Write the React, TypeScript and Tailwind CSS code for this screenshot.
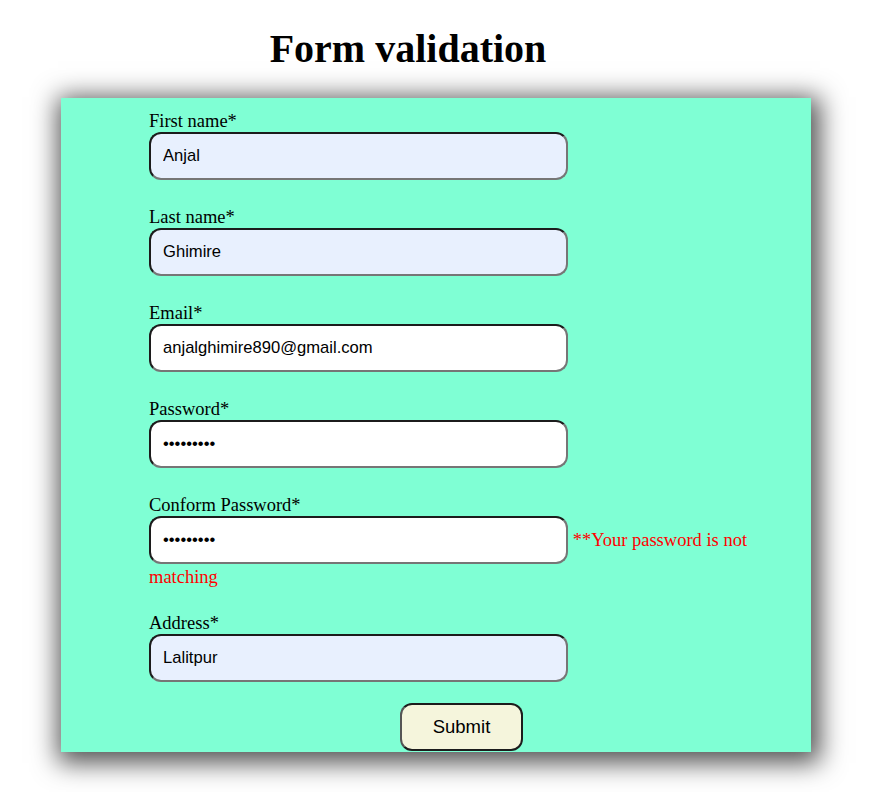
export default function App() {
  const inputBase =
    "inline-block h-12 w-[419px] align-middle rounded-xl border-2 border-t-[#1c1c1c] border-l-[#1c1c1c] border-b-[#767676] border-r-[#767676] px-3 font-['Liberation_Sans',Arial,sans-serif] text-[16.6px] text-black outline-none";

  const fields = [
    { label: "First name*", value: "Anjal", type: "text", filled: true },
    { label: "Last name*", value: "Ghimire", type: "text", filled: true },
    { label: "Email*", value: "anjalghimire890@gmail.com", type: "email", filled: false },
    { label: "Password*", value: "abcdefghi", type: "password", filled: false },
    {
      label: "Conform Password*",
      value: "abcdefghj",
      type: "password",
      filled: false,
      error: "**Your password is not matching",
    },
    { label: "Address*", value: "Lalitpur", type: "text", filled: true },
  ];

  return (
    <div className="min-h-[792px] bg-white font-['Liberation_Serif','Times_New_Roman',serif] text-black">
      <h1 className="pt-[26px] pr-[72px] text-center text-[40px] font-bold leading-[46px]">
        Form validation
      </h1>

      <form
        className="ml-[61px] mt-[26px] w-[750px] bg-[#7fffd4] pt-[12px] pb-[1px] pl-[88px] pr-[50px] text-[18.5px] shadow-[3px_5px_24px_6px_rgba(0,0,0,0.68)]"
        onSubmit={(e) => e.preventDefault()}
      >
        {fields.map((f, i) => (
          <div
            key={f.label}
            className={
              i === fields.length - 1 ? "mb-[21px]" : f.error ? "mb-[24px]" : "mb-[26px]"
            }
          >
            <label className="block leading-[22px]">{f.label}</label>
            <div className="leading-[22px]">
              <input
                type={f.type}
                defaultValue={f.value}
                className={`${inputBase} ${f.filled ? "bg-[#e8f0fe]" : "bg-white"}`}
              />
              {f.error && <span className="align-[-2px] text-[#ff0000]"> {f.error}</span>}
            </div>
          </div>
        ))}

        <button
          type="submit"
          className="ml-[251px] block h-12 w-[123px] rounded-xl border-2 border-[#1c1c1c] border-l-[#555] bg-[#f5f5dc] font-['Liberation_Sans',Arial,sans-serif] text-[18.5px] text-black"
        >
          Submit
        </button>
      </form>
    </div>
  );
}
